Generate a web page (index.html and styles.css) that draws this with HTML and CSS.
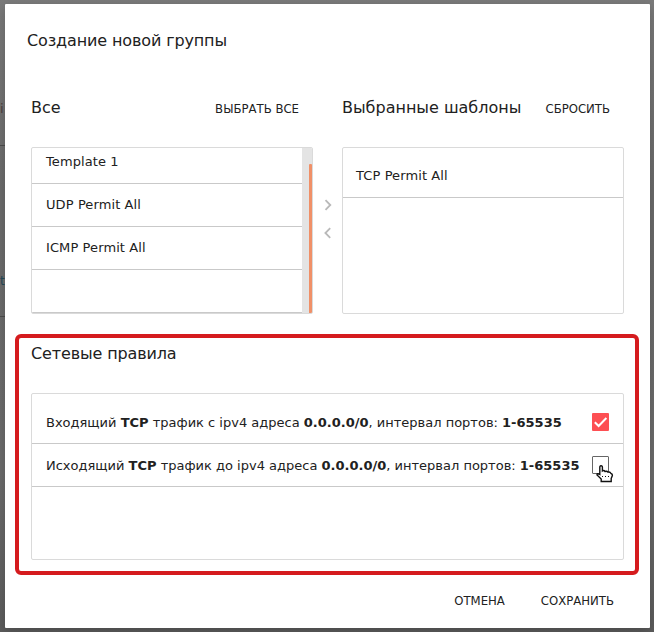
FILE: index.html
```html
<!DOCTYPE html>
<html lang="ru">
<head>
<meta charset="utf-8">
<title>Создание новой группы</title>
<link rel="stylesheet" href="styles.css">
</head>
<body>
<span class="behind behind-top">i</span>
<span class="behind behind-link">t</span>
<main class="modal">
  <h1 class="title">Создание новой группы</h1>
  <div class="transfer">
    <section class="pane">
      <header class="pane-head"><h2>Все</h2><button class="btn all">ВЫБРАТЬ ВСЕ</button></header>
      <div class="list scrolled">
        <ul class="items">
          <li>Template 1</li><li>UDP Permit All</li><li>ICMP Permit All</li><li></li>
        </ul>
        <div class="track"><div class="thumb"></div></div>
      </div>
    </section>
    <div class="arrows">
      <svg width="8" height="12" viewBox="0 0 8 12"><path d="M1.5 1.2 6.3 6 1.5 10.8"/></svg>
      <svg width="8" height="12" viewBox="0 0 8 12"><path d="M6.2 1.2 1.4 6 6.2 10.8"/></svg>
    </div>
    <section class="pane">
      <header class="pane-head"><h2>Выбранные шаблоны</h2><button class="btn reset">СБРОСИТЬ</button></header>
      <div class="list"><ul class="items"><li>TCP Permit All</li></ul></div>
    </section>
  </div>
  <section class="rules">
    <h2>Сетевые правила</h2>
    <div class="list">
      <ul class="items">
        <li><span class="text">Входящий <b>TCP</b> трафик с ipv4 адреса <b>0.0.0.0/0</b>, интервал портов: <b>1-65535</b></span>
          <span class="check on"><svg width="17" height="18" viewBox="0 0 17 18"><path d="M2.8 9.2 6.6 13 14.4 5"/></svg></span></li>
        <li><span class="text">Исходящий <b>TCP</b> трафик до ipv4 адреса <b>0.0.0.0/0</b>, интервал портов: <b>1-65535</b></span>
          <span class="check"><svg class="cursor" width="18" height="18" viewBox="0 0 18 18"><path d="M4.2 1Q6 .2 6.4 2V6Q8 5 9 6.5 11 5.8 12 7.2 14 6.5 15 8.5 16.6 8.8 16.4 10.5L15.2 13.5V16.5H5.2V14L1 10Q.8 7.8 3.8 9.5V2Q3.8 1.3 4.2 1Z"/><path class="dots" d="M6 11.5H14"/></svg></span></li>
      </ul>
    </div>
  </section>
  <footer class="actions"><button class="btn cancel">ОТМЕНА</button><button class="btn save">СОХРАНИТЬ</button></footer>
</main>
</body>
</html>
```
FILE: styles.css
```css
* { box-sizing: border-box; }
body {
  margin: 0;
  height: 632px;
  padding: 4px 4px 4px 5px;
  overflow: hidden;
  position: relative;
  background: linear-gradient(#7a7a7a, #6b6b6b 30%, #6c6c6c 75%, #5c5c5c);
  color: #212121;
  font: 13px/18px "DejaVu Sans", sans-serif;
}
.behind { position: absolute; left: 0; width: 5px; color: #4c4040; }
.behind-top { top: 100px; height: 46px; border-bottom: 1px solid #4c4c4c; }
.behind-link { top: 272px; height: 45px; border-bottom: 1px solid #4c4c4c; color: #244858; font-size: 12px; }
.modal {
  position: relative;
  height: 624px;
  padding: 27px 26px 0 26px;
  background: #fff;
  border-radius: 1px;
  box-shadow: 0 4px 12px rgba(0, 0, 0, .2);
  display: flex;
  flex-direction: column;
}
h1, h2 { margin: 0; font-size: 16px; font-weight: 400; line-height: 20px; }
.title { margin-left: -4px; letter-spacing: -.13px; }
.transfer { display: flex; margin-top: 44px; }
.pane { width: 282px; }
.pane-head { display: flex; justify-content: space-between; align-items: center; height: 26px; }
.btn { border: 0; padding: 0; background: none; color: inherit; font: 13px/18px "DejaVu Sans Condensed", "DejaVu Sans", sans-serif; font-stretch: semi-condensed; white-space: nowrap; }
.pane-head .btn { margin: 2px 14px 0 0; }
.list { height: 167px; border: 1px solid #dadada; border-radius: 2px; overflow: hidden; display: flex; }
.pane .list { margin-top: 26px; }
.items { flex: 1; list-style: none; margin: 0; padding: 7px 0 0; }
.items li {
  height: 43px;
  padding: 0 14px;
  border-bottom: 1px solid #c9c9c9;
  display: flex;
  align-items: center;
  justify-content: space-between;
  white-space: nowrap;
}
.pane .items li { padding-left: 13px; letter-spacing: .1px; }
.scrolled .items { margin-top: -7px; padding: 0; }
.pane .scrolled .items li { padding-left: 14px; }
.track { width: 10px; padding: 16px 0 0 7px; background: #e4e4e4; }
.thumb { width: 3px; height: 150px; border-radius: 1px 1px 0 0; background: #f09068; }
.arrows { width: 29px; padding: 104px 0 0 11px; display: flex; flex-direction: column; gap: 16px; }
.arrows svg { fill: none; stroke: #b9b9b9; stroke-width: 1.8; display: block; }
.rules {
  width: 624px;
  height: 241px;
  margin: 20px 0 0 -16px;
  padding: 6px 12px 0;
  border: 4px solid #d51b1e;
  border-radius: 6px;
}
.rules h2 { letter-spacing: -.13px; }
.rules .list { width: 593px; margin-top: 29px; }
.text { padding-top: 1px; }
.check { position: relative; width: 17px; height: 18px; border: 1px solid #666; border-radius: 1px; }
.check.on { border: 0; background: #fd4f53; }
.check svg { display: block; fill: none; stroke: #fff; stroke-width: 2; }
.check .cursor { position: absolute; left: 3px; top: 8px; fill: #fff; stroke: #111; stroke-width: 1.4; overflow: visible; }
.cursor .dots { stroke-width: 1; stroke-dasharray: 1 2; }
.actions { display: flex; justify-content: flex-end; gap: 36px; margin: 17px 10px 0 0; }
```
